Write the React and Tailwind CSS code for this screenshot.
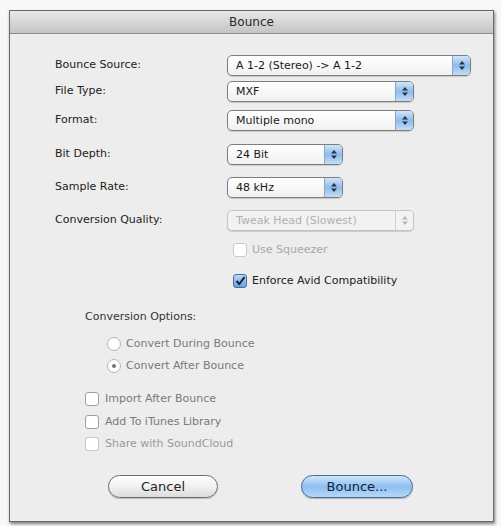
import React from 'react';

const font = { fontFamily: '"DejaVu Sans", "Liberation Sans", sans-serif' };

function Arrows({ disabled }) {
  const c = disabled ? '#b5b5b5' : '#1f3550';
  return (
    <svg width="8" height="11" viewBox="0 0 8 11">
      <path d="M4 1 L7 4.5 L1 4.5 Z" fill={c} />
      <path d="M4 10 L7 6.5 L1 6.5 Z" fill={c} />
    </svg>
  );
}

function Popup({ value, width, disabled }) {
  return (
    <div
      className={`flex h-[21px] items-stretch rounded-[5px] border ${disabled ? 'border-[#c4c4c4] bg-[#f2f2f2]' : 'border-[#7d7d7d] bg-gradient-to-b from-white to-[#f1f1f1]'} shadow-[0_1px_1px_rgba(0,0,0,0.15)]`}
      style={{ width }}
    >
      <span className={`flex-1 pl-[8px] text-[11px] leading-[19px] ${disabled ? 'text-[#b0b0b0]' : 'text-[#1a1a1a]'}`}>{value}</span>
      <span
        className={`flex w-[18px] items-center justify-center rounded-r-[4px] border-l ${disabled ? 'border-[#d0d0d0] bg-[#f2f2f2]' : 'border-[#8aa6c6] bg-gradient-to-b from-[#d3e5f8] via-[#8fbcea] to-[#c5ddf6]'}`}
      >
        <Arrows disabled={disabled} />
      </span>
    </div>
  );
}

function Row({ label, children, mt }) {
  return (
    <div className={`flex items-center ${mt}`}>
      <span className="w-[172px] text-[11px] text-[#222]">{label}</span>
      {children}
    </div>
  );
}

function Check({ checked, disabled }) {
  if (checked) {
    return (
      <span className="flex h-[14px] w-[14px] items-center justify-center rounded-[3px] border border-[#4a6f9e] bg-gradient-to-b from-[#bcd7f5] to-[#6c9fd8]">
        <svg width="11" height="10" viewBox="0 0 11 10">
          <path d="M1.5 5 L4.3 8 L9.5 1.2" stroke="#12233a" strokeWidth="2" fill="none" />
        </svg>
      </span>
    );
  }
  return <span className={`h-[14px] w-[14px] rounded-[3px] border ${disabled ? 'border-[#c8c8c8]' : 'border-[#a0a0a0]'} bg-white`} />;
}

function Radio({ checked }) {
  return (
    <span className="flex h-[14px] w-[14px] items-center justify-center rounded-full border border-[#b5b5b5] bg-white">
      {checked && <span className="h-[4px] w-[4px] rounded-full bg-[#777]" />}
    </span>
  );
}

export default function App() {
  return (
    <div className="h-[526px] w-[501px] bg-[#f8f8f8] pl-[9px] pt-[10px]" style={font}>
      <div className="flex h-[512px] w-[485px] flex-col border border-[#6a6a6a] bg-[#ededed] shadow-[1px_2px_3px_rgba(0,0,0,0.5)]">
        <div className="flex h-[23px] items-center justify-center border-b border-[#8c8c8c] bg-gradient-to-b from-[#e8e8e8] to-[#c4c4c4] text-[12px] text-[#2a2a2a]">
          Bounce
        </div>
        <div className="flex flex-1 flex-col pl-[45px]">
          <Row label="Bounce Source:" mt="mt-[21px]">
            <Popup value="A 1-2 (Stereo) -> A 1-2" width={244} />
          </Row>
          <Row label="File Type:" mt="mt-[5px]">
            <Popup value="MXF" width={187} />
          </Row>
          <Row label="Format:" mt="mt-[8px]">
            <Popup value="Multiple mono" width={187} />
          </Row>
          <Row label="Bit Depth:" mt="mt-[13px]">
            <Popup value="24 Bit" width={116} />
          </Row>
          <Row label="Sample Rate:" mt="mt-[12px]">
            <Popup value="48 kHz" width={116} />
          </Row>
          <Row label="Conversion Quality:" mt="mt-[12px]">
            <Popup value="Tweak Head (Slowest)" width={187} disabled />
          </Row>
          <div className="ml-[178px] mt-[11px] flex items-center gap-[5px]">
            <Check disabled />
            <span className="text-[11px] text-[#a8a8a8]">Use Squeezer</span>
          </div>
          <div className="ml-[178px] mt-[14px] flex items-center gap-[5px]">
            <Check checked />
            <span className="text-[11px] text-[#222]">Enforce Avid Compatibility</span>
          </div>
          <div className="ml-[30px] mt-[20px] text-[11px] text-[#333]">Conversion Options:</div>
          <div className="ml-[52px] mt-[10px] flex items-center gap-[5px]">
            <Radio />
            <span className="text-[11px] text-[#7a7a7a]">Convert During Bounce</span>
          </div>
          <div className="ml-[52px] mt-[6px] flex items-center gap-[5px]">
            <Radio checked />
            <span className="text-[11px] text-[#7a7a7a]">Convert After Bounce</span>
          </div>
          <div className="ml-[30px] mt-[16px] flex items-center gap-[6px]">
            <Check />
            <span className="text-[11px] text-[#7a7a7a]">Import After Bounce</span>
          </div>
          <div className="ml-[30px] mt-[7px] flex items-center gap-[6px]">
            <Check />
            <span className="text-[11px] text-[#7a7a7a]">Add To iTunes Library</span>
          </div>
          <div className="ml-[30px] mt-[5px] flex items-center gap-[6px]">
            <Check disabled />
            <span className="text-[11px] text-[#9a9a9a]">Share with SoundCloud</span>
          </div>
          <div className="ml-[53px] mt-[23px] flex gap-[83px]">
            <button className="h-[23px] w-[110px] rounded-full border border-[#6d6d6d] bg-gradient-to-b from-white via-[#f1f1f1] to-[#dcdcdc] text-[13px] text-[#222] shadow-[0_1px_1px_rgba(0,0,0,0.2)]">
              Cancel
            </button>
            <button className="h-[23px] w-[112px] rounded-full border border-[#4a6b93] bg-gradient-to-b from-[#cfe4fa] via-[#8ebfef] to-[#b6d8f8] text-[13px] text-[#10233c] shadow-[0_1px_1px_rgba(0,0,0,0.25)]">
              Bounce...
            </button>
          </div>
        </div>
      </div>
    </div>
  );
}
